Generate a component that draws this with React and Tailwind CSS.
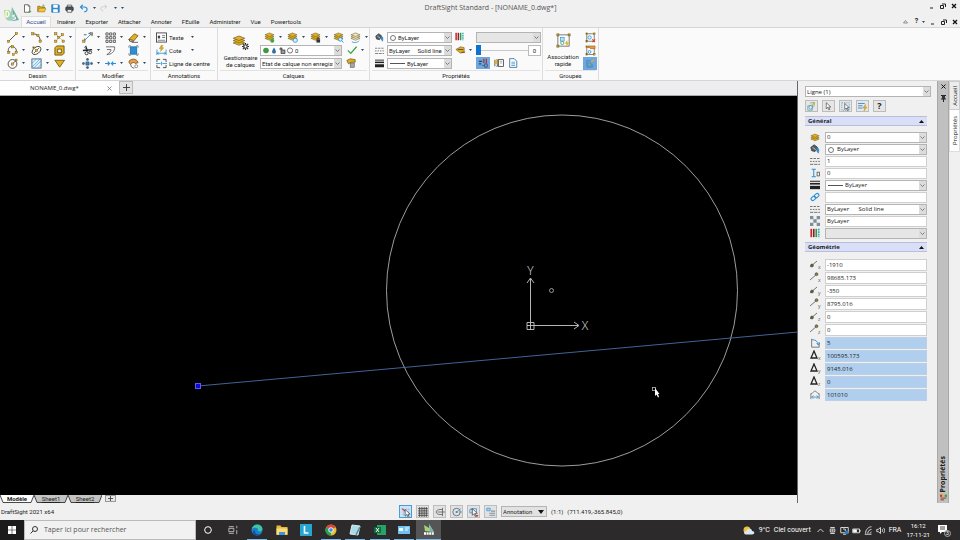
const GOLD = '#e3b021';
const BLUE = '#2b8fd6';

const Svg = ({ children, className = 'size-[11px]' }) => (
  <svg className={`${className} shrink-0`} viewBox="0 0 12 12" fill="none" stroke="#4b4b4b" strokeWidth="0.9" aria-hidden="true">
    {children}
  </svg>
);

const Dot = ({ x, y, c = GOLD, s = 2.4 }) => (
  <rect x={x - s / 2} y={y - s / 2} width={s} height={s} fill={c} stroke="#6b5a1c" strokeWidth="0.5" />
);

const Stack = ({ dy = 0, c = GOLD }) => (
  <g fill={c} stroke="#5b4a14" strokeWidth="0.5">
    <path d={`M1 ${7 + dy}l5-2 5 2-5 2z`} />
    <path d={`M1 ${5 + dy}l5-2 5 2-5 2z`} />
    <path d={`M1 ${3 + dy}l5-2 5 2-5 2z`} />
  </g>
);

const Bucket = () => (
  <>
    <path d="M1 4l4-3 4 3-3 5-4-1z" fill="#52606a" stroke="#333" />
    <path d="M8 4c3 1 3 4 2 7l-2-3z" fill={BLUE} stroke="#35688c" strokeWidth="0.6" />
    <path d="M3 4l4 3" stroke="#d9e2e8" />
  </>
);

const Lines = () => (
  <>
    <path d="M0 3h12" strokeDasharray="3 1.2" />
    <path d="M0 6.500h12" strokeDasharray="2 1.300" />
    <path d="M0 10h12" strokeDasharray="4 1" />
  </>
);

const Weights = () => (
  <>
    <path d="M0 1.500h12" strokeWidth="1.200" stroke="#222" />
    <path d="M0 4.500h12" strokeWidth="2" stroke="#222" />
    <path d="M0 9h12" strokeWidth="4" stroke="#222" />
  </>
);

const Bars = () => (
  <>
    <path d="M1.500 1v10" stroke="#c9252c" strokeWidth="2" />
    <path d="M4.500 1v10" stroke="#8c1d22" strokeWidth="2" />
    <path d="M7.500 1v10" stroke="#2e9a4a" strokeWidth="2" />
    <path d="M10.500 1v10" stroke="#35a7b8" strokeWidth="2" strokeDasharray="2 1" />
  </>
);

const Pointer = ({ x = 3, y = 1 }) => (
  <path transform={`translate(${x} ${y})`} d="M0 0v8l2-2 1.500 3.500 1.300-.6L3.300 5.600H6z" fill="#fff" stroke="#333" strokeWidth="0.8" />
);

const icons = {
  line: <><path d="M2 10L10 2" stroke="#333" /><Dot x={1.8} y={10.2} /><Dot x={10.2} y={1.8} /></>,
  arc: <><path d="M2 2c5 0 8 3 8 8" stroke="#333" /><Dot x={2} y={2} /><Dot x={7.5} y={4} /><Dot x={10} y={10} /></>,
  points: <><path d="M3 3l6 6M9 3L3 9" strokeDasharray="1 1" /><Dot x={2} y={2} /><Dot x={9} y={3} /><Dot x={5} y={6} /><Dot x={2} y={10} /><Dot x={10} y={10} /></>,
  polyline: <><path d="M2 8C0 3 4 1 6 1.500S11 4 10 8" stroke="#333" /><Dot x={2} y={8} /><Dot x={6} y={2} /><Dot x={10} y={8} /><Dot x={7} y={10.5} s={2} /></>,
  ellipse: <><ellipse cx="6" cy="6" rx="5.500" ry="3.500" transform="rotate(-40 6 6)" stroke="#333" /><path d="M3 9l6-6" /><Dot x={6} y={6} /><Dot x={3} y={3} s={2} /></>,
  square: <><path d="M3 1h8v8l-2 2H1V3z" fill={GOLD} stroke="#5e4a10" /><path d="M4 4.500h4v4H4z" fill="#fff" stroke="#5e4a10" /></>,
  circle: <><circle cx="6" cy="6.500" r="4.800" stroke="#333" /><path d="M6 6.500l4-4" stroke="#333" /><Dot x={5.8} y={6.6} /><Dot x={10} y={2.2} s={2} /></>,
  hatch: <><rect x="1" y="1" width="10" height="10" fill="#e6f3fb" stroke="#38566b" /><path d="M1 6l5-5M1 10l9-9M3 11l8-8M7 11l4-4" stroke={BLUE} strokeWidth="0.7" /></>,
  triangle: <path d="M1 2.500h10.500L6.200 10z" fill={GOLD} stroke="#6b5410" />,
  move: <><path d="M2 10L9 3" stroke={BLUE} /><path d="M2 3h3M7 1.500h4v3M3 7v4" /><Dot x={2} y={10} /><Dot x={10} y={2} c="#67a9d8" /></>,
  array: <g fill="#fff" strokeWidth="0.9"><path d="M1 1h2.400v2.400H1zM5 1h2.400v2.400H5zM9 1h2.400v2.400H9zM1 5h2.400v2.400H1zM5 5h2.400v2.400H5zM9 5h2.400v2.400H9zM1 9h2.400v2.400H1zM5 9h2.400v2.400H5zM9 9h2.400v2.400H9z" /></g>,
  eraser: <><path d="M1 8l6-6 4 2-5 6H2z" fill={GOLD} stroke="#7a5c0c" /><path d="M1 8l4 1 1 1H2z" fill="#fff" /><path d="M4 11.300h7" /></>,
  scissors: <><path d="M4 1l2 6M1 6l10-1" stroke="#222" strokeWidth="1.400" /><circle cx="5" cy="9" r="1.700" stroke="#222" /><circle cx="9" cy="8" r="1.500" stroke="#222" /><path d="M2 2l3 3" stroke={BLUE} /></>,
  offset: <><path d="M1 2h9.500C11 7 7 10.500 2 10.500M2 5h4.500c0 2-1 3-4.500 5.500" stroke="#555" /></>,
  stretch: <><rect x="2.500" y="2" width="7" height="8" fill={BLUE} stroke="#1f6ea8" /><path d="M1 1v2M11 1v2M1 9v2M11 9v2M1 .8h2M9 .8h2M1 11.200h2M9 11.200h2" stroke="#777" /></>,
  pan: <><rect x="4.300" y="4.300" width="3.400" height="3.400" fill={BLUE} stroke="#235" strokeWidth="0.6" /><g fill="#3c6688" stroke="#234" strokeWidth="0.5"><circle cx="6" cy="1.600" r="1.200" /><circle cx="6" cy="10.400" r="1.200" /><circle cx="1.600" cy="6" r="1.200" /><circle cx="10.400" cy="6" r="1.200" /></g></>,
  join: <path d="M0 6h4.500M12 6H7.500M3 4l2 2-2 2M9 4L7 6l2 2" stroke={BLUE} strokeWidth="1.300" />,
  copyProps: <><path d="M1 5c0-5 9-5 10 0l-3 1c-1-2-4-1-5 1z" fill="#e2a04a" stroke="#7c4b20" /><path d="M3 7c0 3 2 4 4 4" stroke="#555" /><circle cx="9" cy="9" r="1.600" fill="#fff" stroke="#777" /></>,
  text: <><rect x="0.500" y="1" width="11" height="10" fill="#fff" stroke="#333" /><path d="M2 4h2.500v3H2z" fill="#444" stroke="none" /><path d="M6.500 4h3.500M6.500 6h3.500M2 9h8" stroke="#345" strokeWidth="0.7" /></>,
  dimension: <><path d="M1 5v6M11 5v6" stroke={BLUE} /><path d="M1 9h10M3 7.500L1.500 9 3 10.500M9 7.500L10.500 9 9 10.500" stroke={BLUE} /><path d="M6 0L3.500 4h2L5 7l3.500-4h-2l1-3z" fill={GOLD} stroke="#9c7410" strokeWidth="0.4" /></>,
  centerline: <><path d="M4.500 1.500H1v3M1 7.500v3h3.500M7.500 1.500H11v3M7.500 10.500H11v-3" stroke="#333" /><path d="M0 6h5M7 6h5M6 4v4" stroke={BLUE} /></>,
  layerAdd: <><Stack /><circle cx="9" cy="9.500" r="2.200" fill="#39a845" stroke="none" /></>,
  layerFreeze: <><Stack /><circle cx="9" cy="9" r="2.300" fill="#d8effd" stroke={BLUE} /></>,
  layerLock: <><Stack /><rect x="7" y="8" width="4" height="3.500" fill="#333" stroke="none" /><path d="M8 8V6.500h2V8" stroke="#333" /></>,
  layerFind: <><Stack /><circle cx="8" cy="8" r="2" fill="#d8effd" stroke={BLUE} /><path d="M9.500 9.500l2 2" stroke={BLUE} /></>,
  layerPrev: <><Stack c="#f0e3bd" /><path d="M2 10.500c3 2 6 1 8-1" stroke={BLUE} /></>,
  layers: <Stack dy={1.5} />,
  check: <path d="M1 6.500l3.500 3.500L11.500 2" stroke="#35a340" strokeWidth="1.500" />,
  roller: <><path d="M1 3l4-2 6 1v3H6L3 7z" fill={GOLD} stroke="#725610" /><rect x="5" y="6" width="5" height="5.500" fill="#a5a5a5" stroke="#555" strokeWidth="0.6" /></>,
  bucket: <Bucket />,
  linetype: <Lines />,
  weights: <Weights />,
  bars: <Bars />,
  transparency: <><path d="M1 6l5-3 4 1v5l-4 1z" fill={GOLD} stroke="#5b4a14" strokeWidth="0.6" /><path d="M3 6h6M7 9h4" stroke="#444" /></>,
  matchProps: <><path d="M1 4h4M1 7h3" stroke="#27486c" strokeWidth="1.300" /><path d="M7 1v5M10 1v5" stroke="#a33" strokeWidth="1.500" /><path d="M5 9h2M8 7v4h3V7z" stroke="#345" /></>,
  painter: <><path d="M1 2v8M3 2h1v8H3" stroke="#333" /><rect x="5.500" y="2" width="6" height="8" fill="#fff" stroke="#333" /><path d="M1 3h3v4H1z" fill={GOLD} stroke="none" /><path d="M7 4h3M7 6h3" stroke="#777" strokeWidth="0.7" /></>,
  page: <><path d="M2 .8h5.500l3 3v7.500H2z" fill="#fff" stroke="#245c80" /><path d="M4 5h4.500M4 7h4.500M4 9h4.500" stroke={BLUE} /></>,
  group: <><rect x="1.500" y="1.500" width="9" height="9" stroke="#555" strokeWidth="0.6" /><rect x="3.500" y="3.500" width="3" height="3" fill="#bfe0f5" stroke={BLUE} strokeWidth="0.5" /><circle cx="5" cy="8" r="1.300" stroke="#41a350" strokeWidth="0.6" /><Dot x={1.5} y={1.5} s={1.6} /><Dot x={10.5} y={1.5} s={1.6} /><Dot x={1.5} y={10.5} s={1.6} /><path d="M9 5.500L7 8.500h1.500L8 11l2.600-3.200H9.200z" fill={GOLD} stroke="none" /></>,
  ungroup: <><rect x="2" y="2" width="8" height="8" strokeWidth="0.7" /><circle cx="5" cy="6" r="1.800" stroke={BLUE} /><Dot x={2} y={2} s={2} /><Dot x={10} y={2} s={2} /><Dot x={2} y={10} s={2} /><path d="M8 8l3 3M11 8l-3 3" stroke="#d33a2f" strokeWidth="1.200" /></>,
  groupEdit: <><rect x="2" y="2.500" width="8" height="8" strokeWidth="0.7" /><path d="M3 1h8v3H6z" fill="#e29a3e" stroke="#945a18" strokeWidth="0.6" /><circle cx="5" cy="7.500" r="1.500" stroke={BLUE} /><Dot x={2} y={2} s={2} /><Dot x={2} y={10} s={2} /><Dot x={10} y={10} s={2} /></>,
  groupSel: <><path d="M2 3h4M2 3v7h6V7" stroke="#4b7fb0" /><circle cx="5" cy="7" r="2" stroke="#3b9a7a" /><path d="M7 4l3-2" stroke={GOLD} strokeWidth="1.300" /></>,
  newDoc: <><path d="M2 1h5l2 2v8H2z" fill="#fff" stroke="#333" /><path d="M7 1v2h2" /><path d="M9 8v4M7 10h4" stroke="#39a845" /></>,
  open: <><path d="M1 10V3h3l1 1h5v2" fill={GOLD} stroke="#7a5a10" /><path d="M1 10.500l2-5h9l-2 5z" fill="#f2c73e" stroke="#7a5a10" strokeWidth="0.6" /><path d="M8 4V1l2 1" stroke="#39a845" /></>,
  save: <><path d="M1 1h9l1 1v9H1z" fill={BLUE} stroke="#1b6ea9" /><path d="M3 1h6v4H3zM3 7h6v4H3z" fill="#fff" stroke="none" /></>,
  print: <><path d="M3 1.500h6V4H3z" fill="#fff" stroke="#333" /><rect x="1" y="4" width="10" height="5" rx="1" fill="#45505a" stroke="#333" /><path d="M3 7.500h6v3.500H3z" fill="#fff" stroke="#333" /></>,
  undo: <path d="M5 1L2 4l3 3M2 4h5c5 0 5 6 0 6.500" stroke={BLUE} strokeWidth="1.500" />,
  redo: <path d="M7 1l3 3-3 3M10 4H5C0 4 0 10 5 10.500" stroke="#c6c6c6" strokeWidth="1.200" />,
  selPlus: <><path d="M1 5h6v6H1zM4 1.500l6-1-1 6" fill="#dfeef6" stroke="#5f9a7e" /><circle cx="5" cy="7" r="2.500" stroke={BLUE} /><path d="M6 5l4-4" stroke={GOLD} strokeWidth="1.500" /></>,
  pointer: <Pointer />,
  pointerBox: <><path d="M1 1h10v10H1z" stroke={BLUE} strokeDasharray="1.500 1.500" /><Pointer x={5} y={2} /></>,
  filter: <><path d="M0 2h9M0 5h6M0 8h6" stroke={BLUE} strokeWidth="1.200" /><path d="M10 3L6.500 8H9l-1 4 4-5.500H9.500z" fill={GOLD} stroke="#9c7410" strokeWidth="0.4" /></>,
  scale: <><path d="M2 1.500h5M4.500 1.500v9M2 10.500h5" stroke={BLUE} strokeWidth="1.200" /><rect x="8.500" y="5" width="3" height="4.500" /></>,
  link: <g stroke={BLUE} strokeWidth="1.300" transform="rotate(-40 6 6)"><rect x="0.500" y="4" width="6" height="4" rx="2" /><rect x="5.500" y="4" width="6" height="4" rx="2" /></g>,
  checker: <g fill="#7d8f9c" stroke="none"><path d="M0 0h4v4H0zM8 0h4v4H8zM4 4h4v4H4zM0 8h4v4H0zM8 8h4v4H8z" /></g>,
  angle: <><path d="M2 1v10h9V5" stroke="#555" /><path d="M2 2c5 0 7 2 8 6M8 6l2 2.500L11.500 6" stroke={BLUE} strokeWidth="1.100" /></>,
  length: <><path d="M1 4v7M11 4v7M1 5l5-4 5 4" stroke="#555" strokeWidth="0.8" /><path d="M2 8.500h8M4 6.500l-2 2 2 2M8 6.500l2 2-2 2" stroke={BLUE} strokeWidth="1" /></>,
  snap: <><path d="M1 3h10M1 6h10M1 9h10M3 1v10M6 1v10M9 1v10" stroke="#9cbad6" strokeWidth="0.600" /><path d="M1 2l4 3" stroke="#c33" strokeWidth="1.300" /><Pointer x={5} y={3} /></>,
  grid: <path d="M0 2h12M0 4.700h12M0 7.400h12M0 10h12M2 0v12M4.700 0v12M7.400 0v12M10 0v12" stroke="#222" strokeWidth="0.800" />,
  ortho: <><path d="M9 3H6c-6 0-6 6 0 6h3M3 6h9M9 1v10" stroke="#555" /></>,
  polar: <><circle cx="5.500" cy="6" r="4.500" stroke="#555" /><path d="M5.500 6l5-4M5.500 6H12" stroke={BLUE} strokeDasharray="1.500 1" /><circle cx="5.500" cy="6" r="1.300" fill={BLUE} stroke="none" /></>,
  esnap: <><path d="M1 3h3v4H1zM2 2h7v4" stroke={BLUE} /><Pointer x={4} y={2} /><path d="M8 10.500h3" stroke="#d33" strokeWidth="1.800" /></>,
  etrack: <><path d="M1 1.500h4v3H1z" fill="#bcdcf3" stroke={BLUE} /><path d="M6 5h5M4 7.500h7M4 10h7" stroke="#8995a0" strokeWidth="1.300" /></>,
  palette: <><path d="M0 1h4v4H0z" fill="#c93b32" stroke="none" /><path d="M4 1h4v4H4z" fill="#e9b52c" stroke="none" /><path d="M8 1h4v4H8z" fill="#36a04b" stroke="none" /><path d="M1 7h10M1 10h6" stroke="#8a2c28" strokeWidth="1.500" /></>,
};

const Icon = ({ name, className }) => <Svg className={className}>{icons[name]}</Svg>;

const Caret = ({ className = '' }) => (
  <svg className={`h-[2px] w-[3px] shrink-0 ${className}`} viewBox="0 0 3 2" fill="#2d4a63" aria-hidden="true"><path d="M0 0h3L1.500 2z" /></svg>
);

const Tool = ({ name, label, menu = true }) => (
  <button type="button" aria-label={label} className="flex h-[13px] w-[23px] items-center gap-[3px]">
    <Icon name={name} />
    {menu && <Caret className="ml-px" />}
  </button>
);

const Select = ({ label, value, options = [], className = '', pad = 'pl-[3px]', disabled, children }) => (
  <span className={`relative block h-[11px] ${className}`}>
    <select
      aria-label={label}
      defaultValue={value}
      disabled={disabled}
      className={`block h-full w-full appearance-none border border-[#b4b4b4] pr-[8px] whitespace-pre ${pad} ${disabled ? 'bg-[#e6e6e6]' : 'bg-white'}`}
    >
      <option>{value}</option>
      {options.map((o) => <option key={o}>{o}</option>)}
    </select>
    {children}
    <span className="pointer-events-none absolute inset-y-px right-px flex w-[7px] items-center justify-center bg-[#dcdcdc]">
      <svg className="h-[3px] w-[5px]" viewBox="0 0 5 3" fill="none" stroke="#666" strokeWidth="0.8"><path d="M.5.5l2 2 2-2" /></svg>
    </span>
  </span>
);

const Dash = () => <span className="pointer-events-none absolute top-[5px] left-[3px] h-px w-[15px] bg-[#555]" />;
const Ring = () => <span className="pointer-events-none absolute top-[3px] left-[3px] size-[6px] rounded-full border border-[#777]" />;

const Panel = ({ title, className = '', children }) => (
  <section className={`flex shrink-0 flex-col border-r border-[#dcdcdc] ${className}`}>
    <div className="flex h-[42px] items-center pt-[2px]">{children}</div>
    <h2 className="mx-[2px] h-[10px] border-t border-[#e2e2e2] text-center text-[6px] leading-[9px]">{title}</h2>
  </section>
);

const draw = [
  ['line', 'Ligne', true], ['arc', 'Arc', true], ['points', 'Point', true],
  ['polyline', 'Polyligne', true], ['ellipse', 'Ellipse', true], ['square', 'Région', false],
  ['circle', 'Cercle', true], ['hatch', 'Hachures', true], ['triangle', 'Masque', false],
];

const modify = [
  ['move', 'Déplacer', true], ['array', 'Réseau', true], ['eraser', 'Supprimer', true],
  ['scissors', 'Ajuster', true], ['offset', 'Décaler', false], ['stretch', 'Étirer', false],
  ['pan', 'Transformer', true], ['join', 'Joindre', true], ['copyProps', 'Raccord', true],
];

const menus = ['Insérer', 'Exporter', 'Attacher', 'Annoter', 'FEuille', 'Administrer', 'Vue', 'Powertools'];

const WindowButtons = () => (
  <>
    <button type="button" aria-label="Réduire" className="flex size-[9px] items-center justify-center"><svg className="size-[6px]" viewBox="0 0 6 6"><path d="M1 5h3" stroke="#222" /></svg></button>
    <button type="button" aria-label="Restaurer" className="flex size-[9px] items-center justify-center"><svg className="size-[6px]" viewBox="0 0 6 6" fill="none" stroke="#222"><path d="M.5 2.500h3v3h-3zM2 1h3.500v3" /></svg></button>
    <button type="button" aria-label="Fermer" className="flex size-[9px] items-center justify-center"><svg className="size-[6px]" viewBox="0 0 6 6"><path d="M1 1l4 4M5 1L1 5" stroke="#111" strokeWidth="1.300" /></svg></button>
  </>
);

const Logo = () => (
  <svg className="size-[16px] shrink-0" viewBox="0 0 16 16" aria-hidden="true">
    <path d="M9 1l7 13-6 1z" fill="#6fae9d" />
    <path d="M1 4h5l4 5-3 6-5-3z" fill="#b3d98a" />
    <path d="M9 1L7 10l-4 4 7 1z" fill="#9ccfc9" />
    <path d="M3 5v6c4 0 4-6 0-6M12 9c-3 0-2 2-.5 2s1.500 3-1.500 2" fill="none" stroke="#fff" strokeWidth="1.200" />
  </svg>
);

function Header() {
  return (
    <header className="flex h-[27px] shrink-0">
      <div className="flex w-[21px] items-center justify-center"><Logo /></div>
      <div className="flex min-w-0 flex-1 flex-col">
        <div className="flex h-[16px] items-center">
          <div className="flex flex-1 items-center gap-[4px] pl-[2px]">
            {[['newDoc', 'Nouveau'], ['open', 'Ouvrir'], ['save', 'Enregistrer'], ['print', 'Imprimer'], ['undo', 'Annuler']].map(([n, l]) => (
              <button key={n} type="button" aria-label={l} className="flex w-[10px]"><Icon name={n} className="size-[9px]" /></button>
            ))}
            <Caret />
            <button type="button" aria-label="Rétablir" className="flex w-[10px]"><Icon name="redo" className="size-[8px]" /></button>
            <Caret />
            <Caret />
          </div>
          <h1 className="font-['Open_Sans','Noto_Sans',sans-serif] text-[7px] leading-[14px] text-[#555]">DraftSight Standard - [NONAME_0.dwg*]</h1>
          <div className="flex flex-1 items-center justify-end gap-[2px] pr-[2px] pb-[4px]"><WindowButtons /></div>
        </div>
        <nav className="flex h-[11px] items-stretch text-[6px] leading-[11px]">
          <a href="#accueil" className="w-[30px] border border-b-0 border-[#ddd] bg-[#fafafa] text-center leading-[10px] text-[#33468c]">Accueil</a>
          <div className="flex gap-[10px] pl-[6px]">
            {menus.map((m) => <a key={m} href={`#${m}`}>{m}</a>)}
          </div>
          <div className="ml-auto flex items-center gap-[2px] pr-[1px]">
            <svg className="mr-[4px] size-[5px]" viewBox="0 0 5 5" fill="none" stroke="#555"><path d="M.5 4h4L2.500 1.500z" strokeWidth="0.6" /></svg>
            <button type="button" aria-label="Aide" className="w-[5px] text-[7px] font-bold">?</button>
            <Caret className="mx-[1px]" />
            <WindowButtons />
          </div>
        </nav>
      </div>
    </header>
  );
}

function Ribbon() {
  return (
    <div className="flex h-[54px] shrink-0 border-y border-[#d6d6d6] bg-[#fafafa] text-[6px] leading-[7px]">
      <Panel title="Dessin" className="w-[76px]">
        <div className="grid grid-cols-[24px_23px_23px] pl-[7px]">
          {draw.map(([n, l, m]) => <Tool key={n} name={n} label={l} menu={m} />)}
        </div>
      </Panel>
      <Panel title="Modifier" className="w-[75px]">
        <div className="grid grid-cols-[23px_23px_23px] pl-[6px]">
          {modify.map(([n, l, m]) => <Tool key={n} name={n} label={l} menu={m} />)}
        </div>
      </Panel>
      <Panel title="Annotations" className="w-[67px]">
        <div className="flex flex-col pl-[5px]">
          <button type="button" className="flex h-[13px] items-center gap-[2px]"><Icon name="text" className="size-[11px]" /><span className="w-[20px] text-left">Texte</span><Caret /></button>
          <button type="button" className="flex h-[13px] items-center gap-[2px]"><Icon name="dimension" className="size-[11px]" /><span className="w-[20px] text-left">Cote</span><Caret /></button>
          <button type="button" className="flex h-[13px] items-center gap-[2px]"><Icon name="centerline" className="size-[11px]" /><span className="whitespace-nowrap">Ligne de centre</span></button>
        </div>
      </Panel>
      <Panel title="Calques" className="w-[152px]">
        <button type="button" className="flex w-[42px] shrink-0 flex-col items-center pl-[3px]">
          <span className="relative mb-[4px] size-[17px]">
            <Icon name="layers" className="size-[14px]" />
            <svg className="absolute right-0 bottom-0 size-[7px]" viewBox="0 0 8 8" fill="#fff" stroke="#222" strokeWidth="1.300"><circle cx="4" cy="4" r="2" /><path d="M4 0v1.500M4 6.500V8M0 4h1.500M6.500 4H8M1 1l1 1M6 6l1 1M7 1L6 2M1 7l1-1" /></svg>
          </span>
          Gestionnaire<br />de calques
        </button>
        <div className="flex flex-col">
          <div className="flex h-[13px] items-center pl-[4px]">
            <Tool name="layerAdd" label="Nouveau calque" />
            <Tool name="layerFreeze" label="Geler" />
            <Tool name="layerLock" label="Verrouiller" />
            <button type="button" aria-label="Isoler" className="w-[17px]"><Icon name="layerFind" /></button>
            <Tool name="layerPrev" label="Précédent" />
          </div>
          <div className="flex h-[13px] items-center gap-[5px]">
            <Select label="Calque actif" value="0" className="w-[82px]" pad="pl-[34px]">
              <svg className="pointer-events-none absolute top-[2px] left-[3px] h-[7px] w-[30px]" viewBox="0 0 30 7" fill="none">
                <circle cx="3" cy="3.500" r="2.800" fill="#3b9a43" />
                <path d="M11 .5c3 4 2 6 0 6s-3-2 0-6" fill="#2d6fa8" />
                <path d="M17 3V1h2v2M18 3h4v3.500h-4z" fill="#999" stroke="#333" strokeWidth="0.7" />
                <circle cx="27" cy="3.500" r="2.600" fill="#fff" stroke="#555" strokeWidth="0.8" />
              </svg>
            </Select>
            <button type="button" aria-label="Activer le calque" className="flex items-center gap-[4px]"><Icon name="check" className="size-[10px]" /><Caret /></button>
          </div>
          <div className="flex h-[13px] items-center gap-[4px]">
            <Select label="État de calque" value="Etat de calque non enregist" className="w-[82px]" pad="pl-[1px]" />
            <button type="button" aria-label="États"><Icon name="roller" className="size-[10px]" /></button>
          </div>
        </div>
      </Panel>
      <Panel title="Propriétés" className="w-[173px]">
        <div className="flex flex-col pl-[5px]">
          <div className="flex h-[13px] items-center gap-[3px]"><Icon name="bucket" className="size-[9px]" /><Select label="Couleur" value="ByLayer" className="w-[65px]" pad="pl-[10px]"><Ring /></Select></div>
          <div className="flex h-[13px] items-center gap-[3px]"><Icon name="linetype" className="size-[9px]" /><Select label="Type de ligne" value={'ByLayer\u00a0\u00a0\u00a0\u00a0\u00a0Solid line'} className="w-[65px]" pad="pl-[1px]" /></div>
          <div className="flex h-[13px] items-center gap-[3px]"><Icon name="weights" className="size-[9px]" /><Select label="Épaisseur" value="ByLayer" className="w-[65px]" pad="pl-[19px]"><Dash /></Select></div>
        </div>
        <div className="flex flex-col self-start pl-[3px]">
          <button type="button" aria-label="Style d'impression" className="flex h-[13px] items-center"><Icon name="bars" className="size-[9px]" /></button>
          <button type="button" aria-label="Transparence" className="flex h-[13px] w-[17px] items-center gap-[3px]"><Icon name="transparency" /><Caret /></button>
        </div>
        <div className="flex flex-1 flex-col pl-[4px]">
          <div className="flex h-[13px] items-center"><Select label="Style" value="" disabled className="w-[65px]" /></div>
          <div className="flex h-[13px] items-center">
            <input
              type="range"
              aria-label="Transparence"
              min="0"
              max="90"
              defaultValue="0"
              className="h-[11px] w-[52px] appearance-none bg-[linear-gradient(#c8c8c8,#c8c8c8)] bg-[length:100%_1px] bg-center bg-no-repeat [&::-webkit-slider-thumb]:h-[10px] [&::-webkit-slider-thumb]:w-[5px] [&::-webkit-slider-thumb]:appearance-none [&::-webkit-slider-thumb]:bg-[#0b74d1]"
            />
            <input type="text" aria-label="Valeur de transparence" defaultValue="0" className="h-[11px] w-[13px] border border-[#bbb] bg-white text-center" />
          </div>
          <div className="flex h-[13px] items-center gap-[4px]">
            <button type="button" aria-label="Copier les propriétés" className="flex h-[12px] w-[14px] items-center justify-center bg-[#6fa6e0]"><Icon name="matchProps" className="size-[10px]" /></button>
            <button type="button" aria-label="Peintre"><Icon name="painter" className="size-[10px]" /></button>
            <button type="button" aria-label="Liste"><Icon name="page" className="size-[10px]" /></button>
          </div>
        </div>
      </Panel>
      <Panel title="Groupes" className="w-[56px]">
        <button type="button" className="flex w-[40px] flex-col items-center">
          <Icon name="group" className="mb-[5px] size-[15px]" />
          Association<br />rapide
        </button>
        <div className="flex flex-col">
          <button type="button" aria-label="Dissocier" className="flex h-[13px] w-[14px] items-center justify-center"><Icon name="ungroup" /></button>
          <button type="button" aria-label="Modifier le groupe" className="flex h-[13px] w-[14px] items-center justify-center"><Icon name="groupEdit" /></button>
          <button type="button" aria-label="Sélection de groupe" className="flex h-[13px] w-[14px] items-center justify-center bg-[#6fa6e0]"><Icon name="groupSel" /></button>
        </div>
      </Panel>
    </div>
  );
}

function Drawing() {
  return (
    <div className="min-h-0 flex-1 overflow-hidden bg-black">
      <svg className="block" width="100%" height="100%" fill="none" role="img" aria-label="Espace modèle">
        <circle cx="562" cy="194.500" r="175.500" stroke="#c4c4c4" strokeWidth="0.8" />
        <path d="M198 290L798 236" stroke="#4a6da8" strokeWidth="0.9" />
        <rect x="195.500" y="287.500" width="5" height="5" fill="#0a0ae0" stroke="#5c5cf0" />
        <path d="M530.500 226v-43M527 187l3.500-5 3.500 5M527 226.500h7v7h-7zM527 229.500H578M574 226l5 3.500-5 3.500M530.500 226.500v7" stroke="#c8c8c8" strokeWidth="0.9" />
        <g fill="#e0e0e0" className="font-['Open_Sans',sans-serif] text-[12px] font-light" textAnchor="middle">
          <text x="530.500" y="179">Y</text>
          <text x="585" y="234">X</text>
        </g>
        <circle cx="551.500" cy="194.500" r="2" stroke="#bbb" strokeWidth="0.8" />
        <rect x="652.500" y="291.500" width="3" height="3" stroke="#bbb" strokeWidth="0.8" />
        <path d="M655 292v8l1.500-1.500 1.500 3 1-.5-1-3h1.500z" fill="#fff" />
      </svg>
    </div>
  );
}

function Workspace() {
  return (
    <main className="flex min-w-0 flex-1 flex-col border-r border-[#666]">
      <div className="flex h-[15px] shrink-0 border-b border-[#aaa] bg-[#ededf0]">
        <div className="flex w-[119px] items-center bg-white pl-[30px]">
          <span className="flex-1 font-['Open_Sans','Noto_Sans',sans-serif] text-[6px] leading-[11px]">NONAME_0.dwg*</span>
          <button type="button" aria-label="Fermer le dessin" className="mr-[7px] flex">
            <svg className="size-[5px]" viewBox="0 0 5 5"><path d="M.5.5l4 4M4.500.5l-4 4" stroke="#777" strokeWidth="0.8" /></svg>
          </button>
        </div>
        <button type="button" aria-label="Nouveau dessin" className="flex h-[13px] w-[14px] items-center justify-center border border-[#bbb] bg-[#e4e4e4]">
          <svg className="size-[7px]" viewBox="0 0 7 7"><path d="M3.500 0v7M0 3.500h7" stroke="#333" strokeWidth="0.9" /></svg>
        </button>
      </div>
      <Drawing />
      <div className="flex h-[8px] shrink-0 text-[6px] leading-[8px]">
        {['Modèle', 'Sheet1', 'Sheet2'].map((s, i) => (
          <button key={s} type="button" className="relative isolate h-[8px] w-[34px] leading-[8px]">
            <svg className="absolute inset-0 -z-10 h-[8px] w-[34px]" viewBox="0 0 34 8"><path d="M0 0l3 7.500h28L34 0" fill={i ? '#c4c4c4' : '#fff'} stroke="#333" strokeWidth="0.9" /></svg>
            <span className={i ? 'underline' : 'font-bold'}>{s}</span>
          </button>
        ))}
        <button type="button" aria-label="Ajouter une feuille" className="ml-[3px] flex h-[7px] w-[11px] items-center justify-center border border-[#999] bg-[#e6e6e6]">
          <svg className="size-[5px]" viewBox="0 0 5 5"><path d="M2.500 0v5M0 2.500h5" stroke="#333" strokeWidth="0.8" /></svg>
        </button>
      </div>
    </main>
  );
}

const Section = ({ title }) => (
  <h3 className="flex h-[10px] items-center justify-between border-y border-[#b9bfd8] bg-[#d9dff8] px-[3px] text-[6px] leading-[8px] font-bold">
    {title}
    <svg className="h-[3px] w-[5px]" viewBox="0 0 5 3"><path d="M0 3h5L2.500 0z" fill="#111" /></svg>
  </h3>
);

const general = [
  { icon: 'layers', label: 'Calque', value: '0', select: true },
  { icon: 'bucket', label: 'Couleur', value: 'ByLayer', select: true, pad: 'pl-[11px]', mark: <Ring /> },
  { icon: 'linetype', label: 'Échelle', value: '1' },
  { icon: 'scale', label: 'Épaisseur 3D', value: '0' },
  { icon: 'weights', label: 'Épaisseur de ligne', value: 'ByLayer', select: true, pad: 'pl-[19px]', mark: <Dash /> },
  { icon: 'link', label: 'Hyperlien', value: '' },
  { icon: 'linetype', label: 'Type de ligne', value: 'ByLayer\u00a0\u00a0\u00a0\u00a0\u00a0\u00a0Solid line', select: true },
  { icon: 'checker', label: 'Transparence', value: 'ByLayer' },
  { icon: 'bars', label: "Style d'impression", value: '', select: true, disabled: true },
];

const geometry = [
  { kind: 'start', axis: 'x', value: '-1910' },
  { kind: 'end', axis: 'x', value: '98685.173' },
  { kind: 'start', axis: 'y', value: '-350' },
  { kind: 'end', axis: 'y', value: '8795.016' },
  { kind: 'start', axis: 'z', value: '0' },
  { kind: 'end', axis: 'z', value: '0' },
  { kind: 'angle', value: '5', computed: true },
  { kind: 'delta', axis: 'x', value: '100595.173', computed: true },
  { kind: 'delta', axis: 'y', value: '9145.016', computed: true },
  { kind: 'delta', axis: 'z', value: '0', computed: true },
  { kind: 'length', value: '101010', computed: true },
];

const GeoIcon = ({ kind, axis }) => {
  if (!axis) return <Icon name={kind} className="size-[10px]" />;
  return (
    <svg className="size-[11px] shrink-0" viewBox="0 0 11 11" fill="none" stroke="#555" strokeWidth="0.8" aria-hidden="true">
      {kind === 'delta' ? <path d="M1 8h6L4 1z" stroke="#222" strokeWidth="1.300" /> : <path d="M0 8l7-6" />}
      {kind === 'start' && <circle cx="2" cy="6.500" r="1.400" fill="#6b5b20" />}
      {kind === 'end' && <circle cx="6.500" cy="2.200" r="1.400" fill="#9c8120" />}
      <text x="8" y="10" fontSize="5" fill="#555" stroke="none">{axis}</text>
    </svg>
  );
};

const actions = [['selPlus', 'Ajouter à la sélection'], ['pointer', 'Sélectionner'], ['pointerBox', 'Sélection par fenêtre'], ['filter', 'Sélection intelligente']];

function Properties() {
  return (
    <aside className="flex w-[162px] shrink-0 font-['Open_Sans','Noto_Sans',sans-serif] text-[6px] leading-[8px]">
      <div className="flex-1 pt-[5px] pr-[6px] pl-[7px]">
        <Select label="Sélection" value="Ligne (1)" className="w-full" pad="pl-px" />
        <div className="mt-[3px] flex gap-[4px]">
          {actions.map(([n, l]) => (
            <button key={n} type="button" aria-label={l} className="flex h-[12px] w-[13px] items-center justify-center border border-[#bcbcbc] bg-[#e6e6e6]"><Icon name={n} className="size-[9px]" /></button>
          ))}
          <button type="button" aria-label="Aide" className="h-[12px] w-[13px] border border-[#bcbcbc] bg-[#e6e6e6] text-[9px] leading-[10px] font-bold">?</button>
        </div>
        <div className="mt-[4px] mr-[4px]">
          <Section title="Général" />
          <div className="pt-[5px] pb-[3px]">
            {general.map((f) => (
              <label key={f.label} className="flex h-[12px] items-center">
                <span className="flex w-[20px] justify-center"><Icon name={f.icon} className="size-[10px]" /></span>
                {f.select ? (
                  <Select label={f.label} value={f.value} pad={f.pad ?? 'pl-px'} disabled={f.disabled} className="flex-1">{f.mark}</Select>
                ) : (
                  <input type="text" aria-label={f.label} defaultValue={f.value} className="h-[11px] min-w-0 flex-1 border border-[#cfcfcf] bg-white px-px" />
                )}
              </label>
            ))}
          </div>
          <Section title="Géométrie" />
          <div className="pt-[6px]">
            {geometry.map((f) => (
              <label key={f.kind + (f.axis ?? '')} className="flex h-[13px] items-center">
                <span className="flex w-[20px] justify-center"><GeoIcon kind={f.kind} axis={f.axis} /></span>
                <input
                  type="text"
                  aria-label={`${f.kind} ${f.axis ?? ''}`}
                  defaultValue={f.value}
                  readOnly={f.computed}
                  className={`h-[12px] min-w-0 flex-1 border px-px ${f.computed ? 'border-[#bccfe4] bg-[#b0ceed]' : 'border-[#cfcfcf] bg-white'}`}
                />
              </label>
            ))}
          </div>
        </div>
      </div>
      <div className="flex w-[12px] shrink-0 flex-col items-center border-x border-[#a8a8a8] bg-[#c0c0c0] pt-[3px]">
        <button type="button" aria-label="Fermer le panneau" className="flex"><svg className="size-[5px]" viewBox="0 0 5 5"><path d="M.5.5l4 4M4.500.5l-4 4" stroke="#111" /></svg></button>
        <button type="button" aria-label="Épingler" className="mt-[6px] flex"><svg className="h-[7px] w-[5px]" viewBox="0 0 5 7"><path d="M0 .5h5M0 4h5M2.500 4v3" stroke="#222" /><path d="M1 .5h3V4H1z" fill="#333" /></svg></button>
        <span className="mt-auto rotate-180 text-[7px] font-bold [writing-mode:vertical-rl]">Propriétés</span>
        <Icon name="palette" className="my-[2px] size-[7px]" />
      </div>
      <div className="flex w-[11px] shrink-0 flex-col">
        <button type="button" className="flex h-[29px] items-center justify-center border border-[#ccc] bg-[#ececec]"><span className="rotate-180 [writing-mode:vertical-rl]">Accueil</span></button>
        <button type="button" className="flex h-[42px] items-center justify-center border border-t-0 border-[#ddd] bg-white"><span className="rotate-180 [writing-mode:vertical-rl]">Propriétés</span></button>
      </div>
    </aside>
  );
}

const modes = [['snap', 'Accrochage'], ['grid', 'Grille'], ['ortho', 'Ortho'], ['polar', 'Polaire'], ['esnap', 'AccrocheE'], ['etrack', 'RepérageE']];

function StatusBar() {
  return (
    <div className="flex h-[17px] shrink-0 items-center text-[6px] leading-[8px]">
      <span className="flex-1 pl-px">DraftSight 2021 x64</span>
      <div className="flex w-[561px] shrink-0 items-center gap-[4px]">
        {modes.map(([n, l], i) => (
          <button key={n} type="button" aria-label={l} className={`flex h-[13px] w-[13px] items-center justify-center border ${i ? 'border-[#bdbdbd] bg-[#e2e2e2]' : 'border-[#4d9ad6] bg-[#cbe5f8]'}`}>
            <Icon name={n} className="size-[10px]" />
          </button>
        ))}
        <span className="relative h-[11px] w-[46px]">
          <select aria-label="Échelle d'annotation" className="block h-full w-full appearance-none border border-[#b4b4b4] bg-[#e2e2e2] pl-[1px]">
            <option>Annotation</option>
          </select>
          <svg className="pointer-events-none absolute top-[4px] right-[3px] h-[4px] w-[6px]" viewBox="0 0 6 4"><path d="M0 0h6L3 4z" fill="#111" /></svg>
        </span>
        <span>(1:1)</span>
        <span>(711.419,-365.845,0)</span>
      </div>
    </div>
  );
}

const apps = [
  { name: 'Cortana', art: <circle cx="6" cy="6" r="4" stroke="#fff" strokeWidth="1.200" /> },
  { name: 'Vue des tâches', art: <><path d="M1 2h6M1 10h6M1 4h6v4H1zM10.500 1v3M10.500 6v5" stroke="#ddd" /></> },
  { name: 'Edge', open: true, art: <><circle cx="6" cy="6" r="5.500" fill="#1b7fce" stroke="none" /><path d="M.8 5C2-1 11-1 11.500 5c0 2-3 3-4.500 2C8 3 3 3 .8 5z" fill="#3fc6a2" stroke="none" /><path d="M4 6c-1 3 2 5 5 4-2 2-7 2-7-2 0-1 1-2 2-2z" fill="#0c4f9e" stroke="none" /></> },
  { name: 'Explorateur', art: <><path d="M.5 1.500h4l1 1.500h6v8H.5z" fill="#e9b93e" stroke="none" /><path d="M.5 4.500h11v6H.5z" fill="#fbdd7c" stroke="none" /><path d="M3 11V8h6v3" fill="#3f94dd" stroke="none" /></> },
  { name: 'Lexibar', art: <><rect width="12" height="12" fill="#27a5cf" stroke="none" /><path d="M4.500 2v7h4" stroke="#fff" strokeWidth="1.600" /></> },
  { name: 'Chrome', open: true, art: <><circle cx="6" cy="6" r="5.500" fill="#e8c131" stroke="none" /><path d="M6 6L1.200 3.200A5.500 5.500 0 0110.800 3.200z" fill="#db4437" stroke="none" /><path d="M6 6L1.200 3.200A5.500 5.500 0 006 11.500z" fill="#26a052" stroke="none" /><circle cx="6" cy="6" r="2.300" fill="#4286f4" stroke="#fff" /></> },
  { name: 'Bloc-notes', open: true, art: <><path d="M3 1l8 1-2 9-8-1z" fill="#a8dbe6" stroke="#e8f6f9" /><path d="M7 11l4-8" stroke="#5b8794" strokeWidth="1.500" /></> },
  { name: 'Excel', open: true, art: <><path d="M3 1h9v10H3z" fill="#28a267" stroke="none" /><path d="M0 3h7v6H0z" fill="#0d6b3c" stroke="none" /><path d="M2 4l3 4M5 4L2 8" stroke="#fff" /></> },
  { name: 'Bureau', open: true, art: <><rect x="0" y="2" width="12" height="8" fill="#6fbff2" stroke="none" /><path d="M1 4h4v3H1z" fill="#e9f6ff" stroke="none" /><path d="M7 4h4M7 6h3" stroke="#fff" /></> },
  { name: 'DraftSight', open: true, active: true, art: <><path d="M1 1l5 3 0-4 5 8-9-1z" fill="#a9d275" stroke="none" /><path d="M6 0l5 8-4-1z" fill="#74b3c2" stroke="none" /><path d="M1 9.500h10" stroke="#fff" strokeWidth="2.500" strokeDasharray="2 .6" /></> },
];

const tray = [
  <path d="M2 8l4-4 4 4" />,
  <><path d="M3 2h6M3 10h6M3 4h6v4H3z" /><circle cx="6" cy="6" r=".8" /></>,
  <><path d="M1 2h10v7H1zM4 11h4M4 4h3v3" /><circle cx="9" cy="8.500" r="2.500" fill="#2b7cc9" stroke="none" /></>,
  <><path d="M1 4h9v5H1zM11 5.500v2" /><path d="M2 5h4v3H2z" fill="#fff" /></>,
  <path d="M2 10C2 5 6 1 10 1M5 10c0-3 2-5 5-5.500M8 10c0-1 1-2 2-2M1 11h9" />,
  <path d="M1 4.500h2L6 2v8L3 7.500H1zM8 4c1 1 1 3 0 4M10 2.500c2 2 2 5 0 7" />,
];

function Taskbar() {
  return (
    <footer className="flex h-[20px] shrink-0 items-center bg-[#2c2a2b] text-white">
      <button type="button" aria-label="Démarrer" className="flex h-full w-[24px] items-center justify-center bg-[#1c1b1c]">
        <svg className="size-[8px]" viewBox="0 0 8 8" fill="#fff"><path d="M0 0h3.700v3.700H0zM4.300 0H8v3.700H4.300zM0 4.300h3.700V8H0zM4.300 4.300H8V8H4.300z" /></svg>
      </button>
      <label className="flex h-full w-[172px] items-center gap-[6px] border border-[#bbb] bg-[#f1f1f1] pl-[5px]">
        <svg className="size-[8px]" viewBox="0 0 8 8" fill="none" stroke="#333"><circle cx="5" cy="3" r="2.500" /><path d="M3.200 4.800L.5 7.500" /></svg>
        <input type="text" aria-label="Rechercher" placeholder="Taper ici pour rechercher" className="min-w-0 flex-1 bg-transparent font-['Open_Sans','Noto_Sans',sans-serif] text-[7px] text-[#444] placeholder:text-[#555]" />
      </label>
      <div className="flex h-full">
        {apps.map((a, i) => (
          <button key={a.name} type="button" aria-label={a.name} className={`flex h-full flex-col items-center justify-between ${i % 2 ? 'w-[25px]' : 'w-[24px]'} ${a.active ? 'bg-[#555]' : ''}`}>
            <span className="flex flex-1 items-center"><Svg className={i < 2 ? 'size-[10px]' : 'size-[12px]'}>{a.art}</Svg></span>
            <span className={`h-px ${a.active ? 'w-full' : 'w-[20px]'} ${a.open ? 'bg-[#76b9ed]' : ''}`} />
          </button>
        ))}
      </div>
      <div className="ml-auto flex items-center text-[7px] leading-[9px]">
        <svg className="h-[9px] w-[12px]" viewBox="0 0 12 9"><circle cx="4" cy="4" r="3.500" fill="#f5c33b" /><path d="M3 8.500C0 8 1 5 3.500 5 4 2 9 2 9 5c3 0 3 3.500 0 3.500z" fill="#d7e8f4" /></svg>
        <span className="ml-[4px] whitespace-nowrap">9°C</span>
        <span className="ml-[4px] whitespace-nowrap">Ciel couvert</span>
        <div className="ml-[5px] flex gap-[3px]">
          {tray.map((art, i) => <svg key={i} className="size-[9px]" viewBox="0 0 12 12" fill="none" stroke="#e6e6e6" strokeWidth="1.200">{art}</svg>)}
        </div>
        <span className="ml-[4px]">FRA</span>
        <time className="ml-[5px] text-center text-[6px] leading-[9px]">16:12<br />17-11-21</time>
        <button type="button" aria-label="Notifications" className="relative mr-[12px] ml-[8px] flex">
          <svg className="size-[10px]" viewBox="0 0 10 10"><path d="M0 0h9v7H4L2 9V7H0z" fill="#fff" /><path d="M2 2h5M2 4h5" stroke="#444" /></svg>
          <span className="absolute -right-[3px] -bottom-[2px] flex size-[7px] items-center justify-center rounded-full border border-[#aaa] bg-[#333] text-[5px] leading-none">3</span>
        </button>
      </div>
    </footer>
  );
}

export default function App() {
  return (
    <div className="flex h-screen flex-col overflow-hidden bg-[#f0f0f0] font-['Roboto','Open_Sans',sans-serif] text-[#222]">
      <Header />
      <Ribbon />
      <div className="flex min-h-0 flex-1">
        <Workspace />
        <Properties />
      </div>
      <StatusBar />
      <Taskbar />
    </div>
  );
}
